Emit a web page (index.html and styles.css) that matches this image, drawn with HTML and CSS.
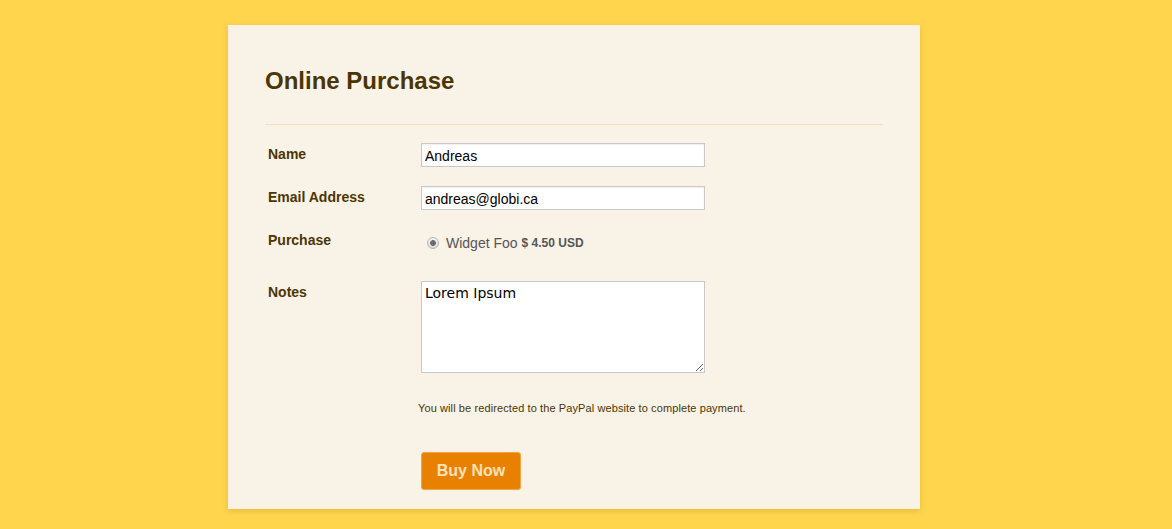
FILE: index.html
```html
<!DOCTYPE html>
<html lang="en">
<head>
<meta charset="utf-8">
<title>Online Purchase</title>
<link rel="stylesheet" href="styles.css">
</head>
<body>
<div class="card">
  <h1 class="title">Online Purchase</h1>
  <hr class="divider">
  <form class="form">
    <div class="row">
      <label class="label" for="name">Name</label>
      <div class="field"><input class="text" id="name" type="text" value="Andreas"></div>
    </div>
    <div class="row">
      <label class="label" for="email">Email Address</label>
      <div class="field"><input class="text" id="email" type="text" value="andreas@globi.ca"></div>
    </div>
    <div class="row row-purchase">
      <span class="label">Purchase</span>
      <div class="field field-radio">
        <label class="option"><input class="radio" type="radio" name="item" checked><span class="item-name">Widget Foo</span> <span class="price">$ 4.50 USD</span></label>
      </div>
    </div>
    <div class="row">
      <label class="label" for="notes">Notes</label>
      <div class="field"><textarea class="area" id="notes">Lorem Ipsum</textarea></div>
    </div>
    <p class="note">You will be redirected to the PayPal website to complete payment.</p>
    <div class="actions">
      <button class="buy" type="button">Buy Now</button>
    </div>
  </form>
</div>
</body>
</html>
```

FILE: styles.css
```css
html, body {
  margin: 0;
  padding: 0;
}
body {
  background: #ffd54e;
  font-family: "Liberation Sans", Arial, sans-serif;
  min-height: 529px;
}
.card {
  width: 692px;
  box-sizing: border-box;
  margin: 25px 0 0 228px;
  padding: 42px 37px 19px;
  background: #f9f2e7;
  box-shadow: 0 2px 6px rgba(160, 110, 0, 0.25);
}
.title {
  margin: 0;
  font-size: 24px;
  line-height: 28px;
  font-weight: bold;
  color: #4b3602;
}
.divider {
  margin: 29px 0 0;
  border: 0;
  height: 1px;
  background: #efdfc1;
}
.form {
  margin: 18px 0 0;
}
.row {
  display: grid;
  grid-template-columns: 156px 1fr;
  align-items: start;
  margin-bottom: 19px;
}
.row-purchase {
  margin-bottom: 19px;
  min-height: 33px;
}
.label {
  padding: 2px 0 0 3px;
  font-size: 14px;
  line-height: 18px;
  font-weight: bold;
  color: #4b3602;
}
.text {
  display: block;
  box-sizing: border-box;
  width: 284px;
  height: 24px;
  margin: 0;
  padding: 4px 3px 2px;
  border: 1px solid #c9c9c9;
  background: #fff;
  box-shadow: inset 0 1px 2px rgba(0, 0, 0, 0.07);
  font-family: "Liberation Sans", Arial, sans-serif;
  font-size: 14px;
  line-height: 16px;
  color: #000;
  outline: none;
}
.field-radio {
  padding-top: 5px;
  padding-left: 6px;
}
.option {
  display: flex;
  align-items: center;
  font-size: 14px;
  line-height: 18px;
  color: #555;
}
.radio {
  appearance: none;
  -webkit-appearance: none;
  width: 12px;
  height: 12px;
  margin: 0 7px 0 0;
  border: 1px solid #b5b5b5;
  border-radius: 50%;
  background: radial-gradient(circle, #6d6d6d 0 2.6px, transparent 3.2px), linear-gradient(#f4f4f4, #dcdcdc);
  box-sizing: border-box;
}
.item-name {
  margin-right: 4px;
}
.price {
  font-size: 12px;
  font-weight: bold;
  color: #555;
}
.area {
  display: block;
  box-sizing: border-box;
  width: 284px;
  height: 92px;
  margin: 0;
  padding: 3px;
  border: 1px solid #c9c9c9;
  background: #fff;
  font-family: "DejaVu Sans", Verdana, sans-serif;
  font-size: 14px;
  color: #000;
  outline: none;
}
.note {
  margin: 28px 0 0 153px;
  font-size: 11px;
  line-height: 14px;
  letter-spacing: 0.1px;
  color: #4b3602;
}
.actions {
  margin: 37px 0 0 156px;
}
.buy {
  display: block;
  width: 100px;
  height: 38px;
  margin: 0;
  padding: 0;
  border: 1px solid #f2a545;
  border-radius: 3px;
  background: #e98100;
  color: #fde2bb;
  font-family: "Liberation Sans", Arial, sans-serif;
  font-size: 16px;
  font-weight: bold;
  cursor: pointer;
}
```
